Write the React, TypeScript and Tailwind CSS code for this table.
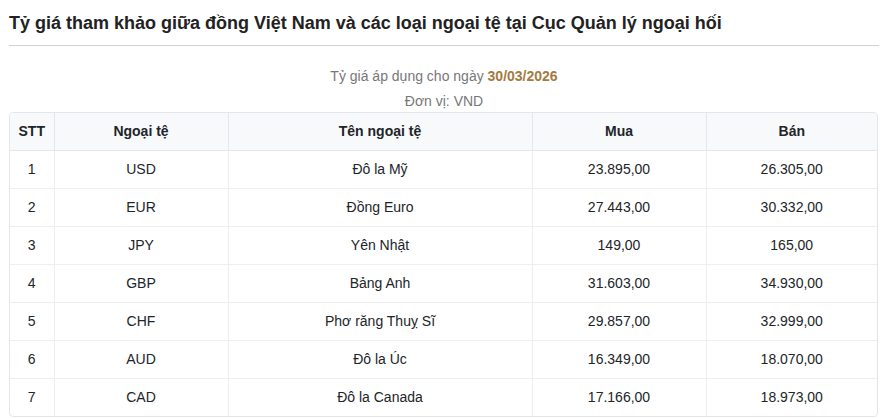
import React from "react";

const rows = [
  ["1", "USD", "Đô la Mỹ", "23.895,00", "26.305,00"],
  ["2", "EUR", "Đồng Euro", "27.443,00", "30.332,00"],
  ["3", "JPY", "Yên Nhật", "149,00", "165,00"],
  ["4", "GBP", "Bảng Anh", "31.603,00", "34.930,00"],
  ["5", "CHF", "Phơ răng Thuỵ Sĩ", "29.857,00", "32.999,00"],
  ["6", "AUD", "Đô la Úc", "16.349,00", "18.070,00"],
  ["7", "CAD", "Đô la Canada", "17.166,00", "18.973,00"],
];

export default function App() {
  return (
    <div className="w-[888px] h-[419px] overflow-hidden bg-white pl-[9px] pr-[9px] text-[#212529]" style={{ fontFamily: '"Liberation Sans", Arial, sans-serif' }}>
      <h1 className="pt-[12px] pb-[11px] text-[18px] leading-[22px] font-bold text-[#222]">
        Tỷ giá tham khảo giữa đồng Việt Nam và các loại ngoại tệ tại Cục Quản lý ngoại hối
      </h1>
      <div className="h-px bg-[#d0d0d0]" />
      <div className="mt-[20px] text-center text-[14px] leading-[20px] text-[#777]">
        Tỷ giá áp dụng cho ngày <span className="font-bold text-[#a57b3f]">30/03/2026</span>
      </div>
      <div className="mt-[5px] text-center text-[14px] leading-[20px] text-[#777]">Đơn vị: VND</div>
      <div className="mt-[1px] w-[869px] overflow-hidden rounded-[4px] border border-[#e3e6ea]">
        <table className="w-full border-collapse text-[14px] text-[#212529]">
          <colgroup>
            <col className="w-[44px]" />
            <col className="w-[174px]" />
            <col className="w-[304px]" />
            <col className="w-[174px]" />
            <col />
          </colgroup>
          <thead>
            <tr className="h-[37px] bg-[#f8f9fa]">
              <th className="border-r border-b border-[#e3e6ea] font-bold">STT</th>
              <th className="border-r border-b border-[#e3e6ea] font-bold">Ngoại tệ</th>
              <th className="border-r border-b border-[#e3e6ea] font-bold">Tên ngoại tệ</th>
              <th className="border-r border-b border-[#e3e6ea] font-bold">Mua</th>
              <th className="border-b border-[#e3e6ea] font-bold">Bán</th>
            </tr>
          </thead>
          <tbody>
            {rows.map((r, i) => (
              <tr key={i} className="h-[38px]">
                {r.map((c, j) => (
                  <td
                    key={j}
                    className={`text-center ${j < 4 ? "border-r" : ""} ${i < rows.length - 1 ? "border-b" : ""} border-[#eceef1]`}
                  >
                    {c}
                  </td>
                ))}
              </tr>
            ))}
          </tbody>
        </table>
      </div>
    </div>
  );
}
